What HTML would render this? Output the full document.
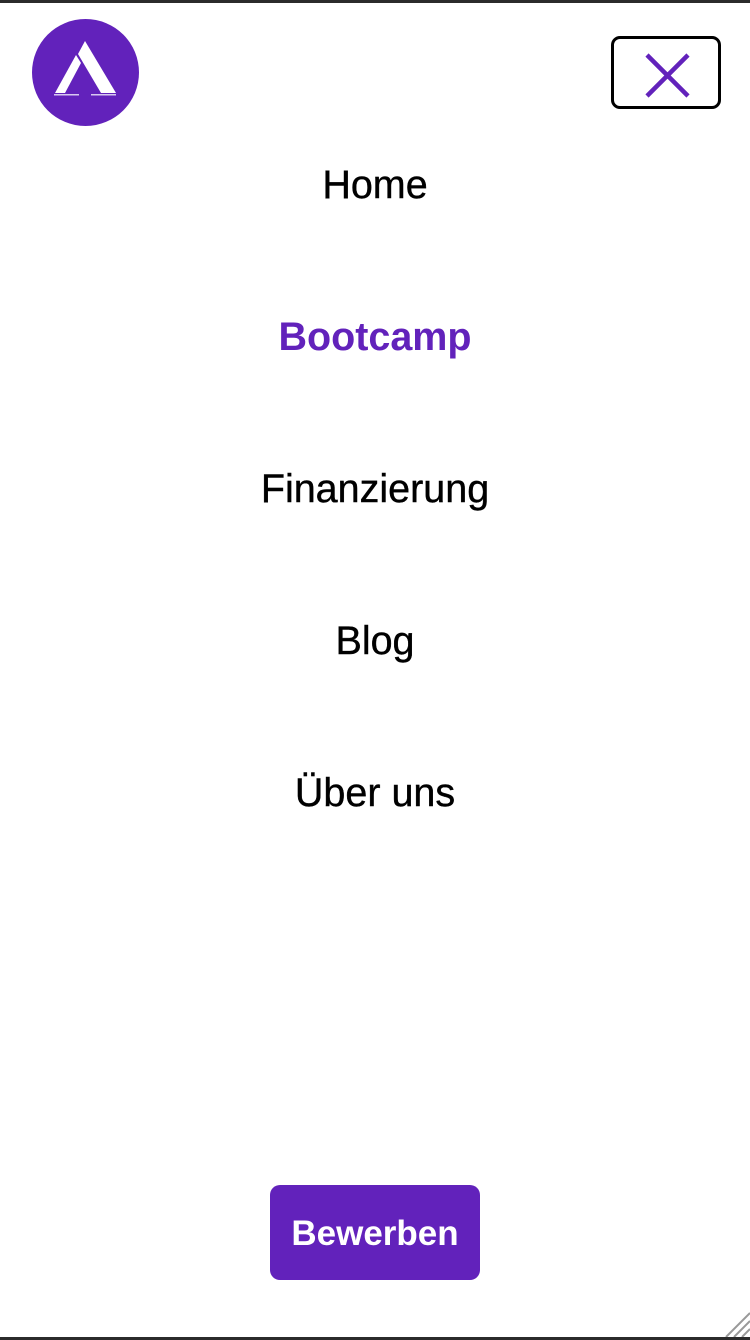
<!DOCTYPE html>
<html><head><meta charset="utf-8"><style>
html,body{margin:0;padding:0;}
body{width:750px;height:1340px;position:relative;background:#fff;font-family:"Liberation Sans",Arial,sans-serif;overflow:hidden;}
.tb{position:absolute;left:0;top:0;width:750px;height:3px;background:#2b2b2b;}
.bb{position:absolute;left:0;bottom:0;width:750px;height:3px;background:#2b2b2b;}
.nav{position:absolute;left:0;width:750px;text-align:center;font-size:39.5px;color:#000;line-height:40px;-webkit-text-stroke:0.4px #000;}
.btn{position:absolute;left:270px;top:1185px;width:210px;height:95px;background:#6222bb;border-radius:10px;color:#fff;font-weight:bold;font-size:35px;line-height:97px;text-align:center;}
.close{position:absolute;left:611px;top:36px;width:104px;height:67px;border:3px solid #000;border-radius:9px;}
</style></head><body>
<div class="tb"></div>
<svg style="position:absolute;left:32px;top:19px" width="107" height="107" viewBox="0 0 107 107">
<circle cx="53.5" cy="53.5" r="53.5" fill="#6222bb"/>
<polygon points="53,22 84,74 69,74 46,35" fill="#fff"/>
<polygon points="44,36 49,44 33,74 23,74" fill="#fff"/>
<rect x="22" y="75" width="25" height="1.5" fill="#d8c8f0"/>
<rect x="59" y="75" width="25" height="1.5" fill="#d8c8f0"/>
</svg>
<div class="close"><svg width="104" height="67" viewBox="0 0 104 67" style="display:block"><path d="M33 16 L74 57 M74 16 L33 57" stroke="#6222bb" stroke-width="4.5"/></svg></div>
<div class="nav" style="top:165px">Home</div>
<div class="nav" style="top:317px;color:#6222bb;font-weight:bold;-webkit-text-stroke:0">Bootcamp</div>
<div class="nav" style="top:469px">Finanzierung</div>
<div class="nav" style="top:621px">Blog</div>
<div class="nav" style="top:773px">Über uns</div>
<div class="btn">Bewerben</div>
<svg style="position:absolute;left:722px;top:1310px" width="28" height="27"><path d="M4 27 L28 3 M12 27 L28 11 M20 27 L28 19" stroke="#999" stroke-width="2"/></svg>
<div class="bb"></div>
</body></html>
